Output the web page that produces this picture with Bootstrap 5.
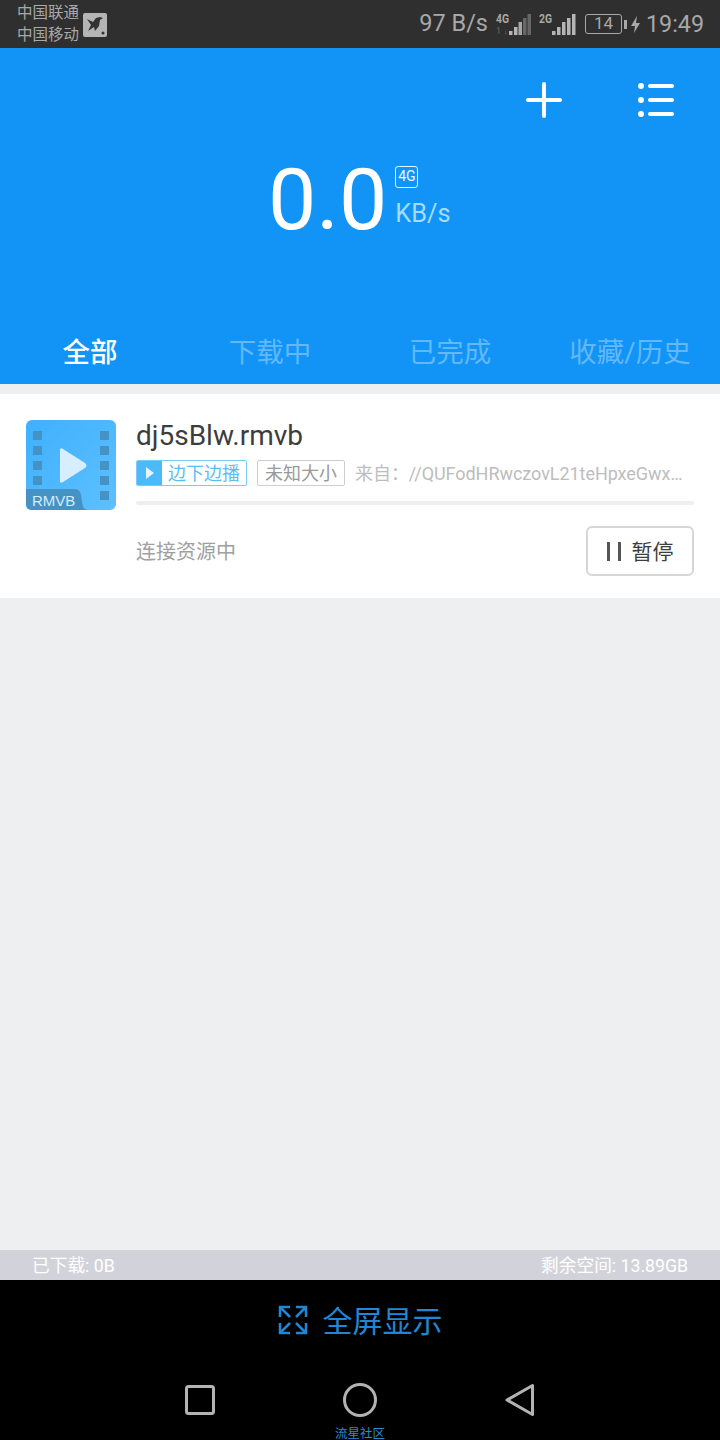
<!DOCTYPE html>
<html lang="zh">
<head>
<meta charset="UTF-8">
<meta name="viewport" content="width=device-width, initial-scale=1.0">
<title>下载</title>
<link href="https://cdn.jsdelivr.net/npm/bootstrap@5.3.3/dist/css/bootstrap.min.css" rel="stylesheet">
<script src="https://cdn.jsdelivr.net/npm/bootstrap@5.3.3/dist/js/bootstrap.bundle.min.js"></script>
<style>
body { width: 720px; height: 1440px; overflow: hidden; background: #eeeff1; font-family: Roboto, "Noto Sans CJK SC", sans-serif; }
.screen { height: 1440px; }

.status-bar { height: 48px; background: #2f2f2f; color: #a8a8a8; padding: 0 16px 0 17px; }
.carrier { font-size: 15.5px; line-height: 22px; width: 66px; white-space: nowrap; }
.bird-box { width: 24px; height: 24px; background: #b5b5b5; border-radius: 2px; margin-top: 2px; }
.net-speed { font-size: 23.5px; margin-right: 8px; }
.sig-wrap { height: 24px; }
.sig-wrap svg { display: block; }
.batt { width: 37px; height: 20px; border: 1.5px solid #a8a8a8; border-radius: 3px; font-size: 17px; line-height: 17px; text-align: center; }
.batt-tip { width: 3px; height: 9px; background: #a8a8a8; margin: 0 4px 0 2px; }
.clock { font-size: 23.3px; margin-left: 6px; }

.head-panel { height: 336px; background: #1294f6; }
.head-tools { height: 102px; padding: 33px 45px 0 0; gap: 74px; }
.speed-row { height: 100px; padding-left: 268px; }
.speed-num { font-size: 86px; line-height: 100px; color: #fff; font-weight: 400; }
.speed-side { margin-left: 8px; padding-top: 16px; }
.net-tag { width: 23px; height: 22px; border: 1.5px solid #e8f6ff; border-radius: 3px; color: #e8f6ff; font-size: 14px; line-height: 19px; text-align: center; }
.speed-unit { color: #a5dbfd; font-size: 25.300px; line-height: 30px; margin-top: 11px; }
.tab-row { height: 68px; margin-top: 83px; }
.tab-row a { color: #63b8f9; font-size: 27.5px; line-height: 40px; width: 180px; text-align: center; text-decoration: none; white-space: nowrap; }
.tab-row a.on { color: #fff; font-weight: 500; }

.task-item { height: 204px; margin-top: 10px; background: #fff; padding: 26px 26px 0; }
.file-thumb { width: 90px; height: 90px; flex: none; display: block; }
.task-body { margin-left: 20px; width: 558px; }
.file-name { font-size: 28px; line-height: 32px; color: #3d3d3d; }
.tag-row { margin-top: 8px; height: 26px; font-size: 18px; line-height: 27px; }
.play-tag { height: 26px; width: 111px; border: 1px solid #7cc9f6; border-radius: 2px; color: #5cbdf5; line-height: 25px; overflow: hidden; }
.play-tag-ico { width: 25px; height: 24px; background: #4cb9f8; flex: none; margin-right: 6px; }
.size-tag { height: 26px; width: 88px; margin-left: 10px; border: 1px solid #cfcfcf; border-radius: 2px; color: #999; line-height: 25px; text-align: center; }
.from-txt { color: #bdbdbd; margin-left: 10px; white-space: nowrap; letter-spacing: -.05px; }
.task-bar { height: 4px; background: #eeeeee; margin-top: 15px; border-radius: 2px; }
.task-foot { margin-top: 21px; }
.state-txt { color: #a0a0a0; font-size: 20px; padding-top: 2px; }
.pause-btn { width: 108px; height: 50px; border: 2px solid #d6d6d6; border-radius: 6px; background: #fff; color: #3d3d3d; font-size: 21px; padding: 3px 0 0; gap: 11px; }
.pause-ico { width: 14px; height: 19px; border-left: 3px solid #555; border-right: 3px solid #555; margin-top: -2px; }

.empty-zone { height: 652px; }
.foot-info { height: 30px; background: #d2d3da; color: #fff; font-size: 17.7px; line-height: 32px; padding: 0 32px; }
.fs-bar { height: 80px; background: #000; color: #2186d4; font-size: 30px; gap: 15px; }
.fs-bar span { padding-top: 2px; }
.sys-nav { height: 80px; background: #000; position: relative; }
.nav-keys { position: absolute; left: 0; top: 0; }
.brand-tip { position: absolute; left: 0; right: 0; bottom: 0; text-align: center; color: #2a8ad4; font-size: 12.5px; line-height: 13px; }
</style>
</head>
<body>
<div class="screen d-flex flex-column">

  <div class="status-bar d-flex align-items-center flex-shrink-0">
    <div class="carrier">中国联通<br>中国移动</div>
    <div class="bird-box d-flex align-items-center justify-content-center">
      <svg width="24" height="24" viewBox="0 0 24 24"><path d="M4 6 L10 9 L13 5 L17 4 L20 5 L17 7 L16 13 L12 18 L11 14 L5 18 L8 12 Z" fill="#333"/><circle cx="20" cy="20" r="1.5" fill="#333"/></svg>
    </div>
    <div class="ms-auto d-flex align-items-center">
      <span class="net-speed">97 B/s</span>
      <div class="sig-wrap me-2">
        <svg width="35" height="24" viewBox="0 0 35 24">
          <text x="0" y="11" font-size="12" font-weight="700" fill="#a8a8a8" font-family="Roboto" textLength="13" lengthAdjust="spacingAndGlyphs">4G</text>
          <text x="0" y="22" font-size="9" fill="#666" font-family="Roboto" textLength="12">1↓</text>
          <rect x="13" y="19" width="3.500" height="4" fill="#b5b5b5"/>
          <rect x="18" y="15" width="3.500" height="8" fill="#b5b5b5"/>
          <rect x="22.500" y="10" width="3.500" height="13" fill="#a8a8a8"/>
          <rect x="27" y="6" width="3.500" height="17" fill="#666"/>
          <rect x="31.500" y="2" width="3.500" height="21" fill="#666"/>
        </svg>
      </div>
      <div class="sig-wrap me-2">
        <svg width="38" height="24" viewBox="0 0 38 24">
          <text x="0" y="11" font-size="12" font-weight="700" fill="#a8a8a8" font-family="Roboto" textLength="13" lengthAdjust="spacingAndGlyphs">2G</text>
          <rect x="13" y="19" width="3.500" height="4" fill="#b5b5b5"/>
          <rect x="18" y="15" width="3.500" height="8" fill="#b5b5b5"/>
          <rect x="23" y="10" width="3.500" height="13" fill="#b5b5b5"/>
          <rect x="28" y="6" width="3.500" height="17" fill="#b5b5b5"/>
          <rect x="33" y="2" width="3.500" height="21" fill="#b5b5b5"/>
        </svg>
      </div>
      <div class="batt">14</div>
      <div class="batt-tip"></div>
      <svg width="9" height="17" viewBox="0 0 9 17"><path d="M6 0 L0 10 H4 L3 17 L9 7 H5 Z" fill="#a8a8a8"/></svg>
      <span class="clock">19:49</span>
    </div>
  </div>

  <div class="head-panel flex-shrink-0">
    <div class="head-tools d-flex justify-content-end">
      <svg width="38" height="38" viewBox="0 0 38 38"><path d="M3 19 H35 M19 3 V35" stroke="#fff" stroke-width="4" stroke-linecap="round"/></svg>
      <svg width="38" height="38" viewBox="0 0 38 38"><g fill="#fff"><circle cx="4" cy="5" r="3"/><circle cx="4" cy="19" r="3"/><circle cx="4" cy="33" r="3"/></g><path d="M13 5 H35 M13 19 H35 M13 33 H35" stroke="#fff" stroke-width="4" stroke-linecap="round"/></svg>
    </div>
    <div class="speed-row d-flex">
      <div class="speed-num">0.0</div>
      <div class="speed-side">
        <div class="net-tag">4G</div>
        <div class="speed-unit">KB/s</div>
      </div>
    </div>
    <div class="tab-row d-flex">
      <a href="#" class="on">全部</a>
      <a href="#">下载中</a>
      <a href="#">已完成</a>
      <a href="#">收藏/历史</a>
    </div>
  </div>

  <div class="task-item d-flex flex-shrink-0">
    <svg class="file-thumb" viewBox="0 0 90 90">
      <defs><linearGradient id="thumbFill" x1="0" y1="0" x2="1" y2="1"><stop offset="0" stop-color="#3fb0fd"/><stop offset="1" stop-color="#5dc0ff"/></linearGradient></defs>
      <rect width="90" height="90" rx="6" fill="url(#thumbFill)"/>
      <g fill="#4592c4">
        <rect x="7" y="11" width="9" height="9"/><rect x="7" y="26" width="9" height="9"/><rect x="7" y="41" width="9" height="9"/><rect x="7" y="56" width="9" height="9"/>
        <rect x="74" y="11" width="9" height="9"/><rect x="74" y="26" width="9" height="9"/><rect x="74" y="41" width="9" height="9"/><rect x="74" y="56" width="9" height="9"/><rect x="74" y="71" width="9" height="9"/>
      </g>
      <path d="M34 30 Q34 27 37 29 L59 43 Q62 45.500 59 48 L37 62 Q34 64 34 61 Z" fill="#d6eefd"/>
      <path d="M0 69 H49 Q54 69 55 75 L56 82 Q57 90 62 90 H6 Q0 90 0 84 Z" fill="#4592c4"/>
      <text x="6" y="86" font-size="15" fill="#d5ecfb" font-family="Liberation Sans">RMVB</text>
    </svg>
    <div class="task-body">
      <div class="file-name">dj5sBlw.rmvb</div>
      <div class="tag-row d-flex">
        <div class="play-tag d-flex">
          <div class="play-tag-ico d-flex align-items-center justify-content-center">
            <svg width="10" height="12" viewBox="0 0 10 12"><path d="M1 0 L9 6 L1 12 Z" fill="#e3f4ff"/></svg>
          </div>边下边播
        </div>
        <div class="size-tag">未知大小</div>
        <div class="from-txt">来自：//QUFodHRwczovL21teHpxeGwx…</div>
      </div>
      <div class="task-bar"></div>
      <div class="task-foot d-flex justify-content-between align-items-center">
        <span class="state-txt">连接资源中</span>
        <button type="button" class="btn pause-btn d-flex align-items-center justify-content-center">
          <span class="pause-ico"></span>暂停
        </button>
      </div>
    </div>
  </div>

  <div class="empty-zone flex-shrink-0"></div>

  <div class="foot-info d-flex justify-content-between flex-shrink-0">
    <span>已下载: 0B</span>
    <span>剩余空间: 13.89GB</span>
  </div>

  <div class="fs-bar d-flex align-items-center justify-content-center flex-shrink-0">
    <svg width="30" height="30" viewBox="0 0 30 30" fill="none" stroke="#2186d4" stroke-width="2.500"><path d="M2 12 V2 H12 M18 2 H28 V12 M28 18 V28 H18 M12 28 H2 V18 M3 3 L12 12 M27 3 L18 12 M27 27 L18 18 M3 27 L12 18"/></svg>
    <span>全屏显示</span>
  </div>

  <div class="sys-nav flex-shrink-0">
    <svg class="nav-keys" width="720" height="80" viewBox="0 0 720 80" fill="none" stroke="#b3b3b3" stroke-width="3" stroke-linejoin="round">
      <rect x="186.500" y="26.500" width="27" height="27" rx="2"/>
      <circle cx="360" cy="40" r="15.500"/>
      <path d="M532.500 25.500 V54.500 L507 40 Z"/>
    </svg>
    <div class="brand-tip">流星社区</div>
  </div>

</div>
</body>
</html>
